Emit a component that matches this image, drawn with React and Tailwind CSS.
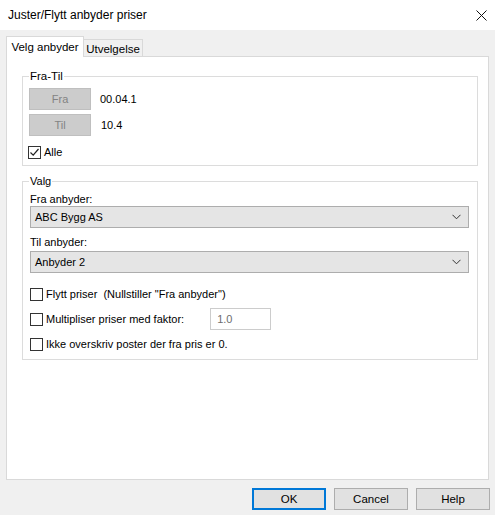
import React from "react";

function Check({ checked }) {
  return (
    <div className="w-[13px] h-[13px] border border-[#333333] bg-white flex items-center justify-center shrink-0">
      {checked && (
        <svg width="11" height="11" viewBox="0 0 11 11">
          <path d="M1.5 5.5 L4.2 8.2 L9.5 2" fill="none" stroke="#222" strokeWidth="1.2" />
        </svg>
      )}
    </div>
  );
}

function Chevron() {
  return (
    <svg width="9" height="6" viewBox="0 0 9 6">
      <path d="M0.5 0.8 L4.5 4.8 L8.5 0.8" fill="none" stroke="#333" strokeWidth="1" />
    </svg>
  );
}

function Dropdown({ text }) {
  return (
    <div className="ml-[1px] w-[439px] h-[22px] border border-[#adadad] bg-[#e5e5e5] flex items-center justify-between pl-[4px] pr-[7px]">
      <span>{text}</span>
      <Chevron />
    </div>
  );
}

export default function App() {
  return (
    <div
      className="w-[495px] h-[515px] bg-[#f0f0f0] text-[11.5px] text-black leading-[14px] overflow-hidden"
      style={{ fontFamily: '"Liberation Sans", Arial, sans-serif' }}
    >
      {/* Title bar */}
      <div className="h-[30px] bg-white flex items-center justify-between pl-[8px] pr-[8px]">
        <span className="text-[12px]">Juster/Flytt anbyder priser</span>
        <svg width="11" height="11" viewBox="0 0 11 11">
          <path d="M0.5 0.5 L10.5 10.5 M10.5 0.5 L0.5 10.5" stroke="#111" strokeWidth="1" />
        </svg>
      </div>

      {/* Tabs */}
      <div className="mt-[6px] ml-[6px] h-[20px] flex items-end relative z-10">
        <div className="w-[78px] h-[21px] -mb-[1px] bg-white border-l border-t border-r border-[#d9d9d9] flex items-center justify-center">
          Velg anbyder
        </div>
        <div className="w-[59px] h-[17px] bg-[#f0f0f0] border-t border-r border-[#d9d9d9] flex items-center justify-center pt-[2px]">
          Utvelgelse
        </div>
      </div>

      {/* Panel */}
      <div className="ml-[6px] w-[483px] h-[424px] bg-white border border-[#d9d9d9] pt-[12px] pl-[15px] text-[11px]">
        <fieldset className="w-[456px] border border-[#dcdcdc] pl-[6px] pt-[5px] pb-[6px]">
          <legend className="px-[1px] leading-[14px] text-[11.5px]">Fra-Til</legend>
          <div className="flex items-center">
            <div className="w-[62px] h-[22px] bg-[#cccccc] border border-[#bfbfbf] text-[#838383] flex items-center justify-center">
              Fra
            </div>
            <span className="ml-[9px]">00.04.1</span>
          </div>
          <div className="flex items-center mt-[4px]">
            <div className="w-[62px] h-[22px] bg-[#cccccc] border border-[#bfbfbf] text-[#838383] flex items-center justify-center">
              Til
            </div>
            <span className="ml-[10px]">10.4</span>
          </div>
          <div className="flex items-center mt-[9px] h-[14px] -ml-[1px]">
            <Check checked />
            <span className="ml-[3px]">Alle</span>
          </div>
        </fieldset>

        <fieldset className="mt-[8px] w-[456px] border border-[#dcdcdc] pl-[6px] pt-[4px] pb-[5px]">
          <legend className="px-[1px] leading-[14px]">Valg</legend>
          <div className="ml-[1px]">Fra anbyder:</div>
          <Dropdown text="ABC Bygg AS" />
          <div className="ml-[1px] mt-[7px]">Til anbyder:</div>
          <div className="mt-[2px]">
            <Dropdown text="Anbyder 2" />
          </div>
          <div className="mt-[11px] h-[20px] flex items-center ml-[1px]">
            <Check />
            <span className="ml-[3px] whitespace-pre">Flytt priser  (Nullstiller "Fra anbyder")</span>
          </div>
          <div className="mt-[4px] h-[22px] flex items-center ml-[1px]">
            <Check />
            <span className="ml-[3px]">Multipliser priser med faktor:</span>
            <div className="ml-[26px] w-[61px] h-[22px] border border-[#cccccc] bg-white flex items-center pl-[6px] text-[#6d6d6d]">
              1.0
            </div>
          </div>
          <div className="mt-[4px] h-[20px] flex items-center ml-[1px]">
            <Check />
            <span className="ml-[3px]">Ikke overskriv poster der fra pris er 0.</span>
          </div>
        </fieldset>
      </div>

      {/* Buttons */}
      <div className="mt-[8px] flex justify-end gap-[8px] pr-[5px]">
        <div className="w-[74px] h-[22px] bg-[#e1e1e1] border-2 border-[#0078d7] flex items-center justify-center">
          OK
        </div>
        <div className="w-[74px] h-[22px] bg-[#e1e1e1] border border-[#adadad] flex items-center justify-center">
          Cancel
        </div>
        <div className="w-[74px] h-[22px] bg-[#e1e1e1] border border-[#adadad] flex items-center justify-center">
          Help
        </div>
      </div>
    </div>
  );
}
